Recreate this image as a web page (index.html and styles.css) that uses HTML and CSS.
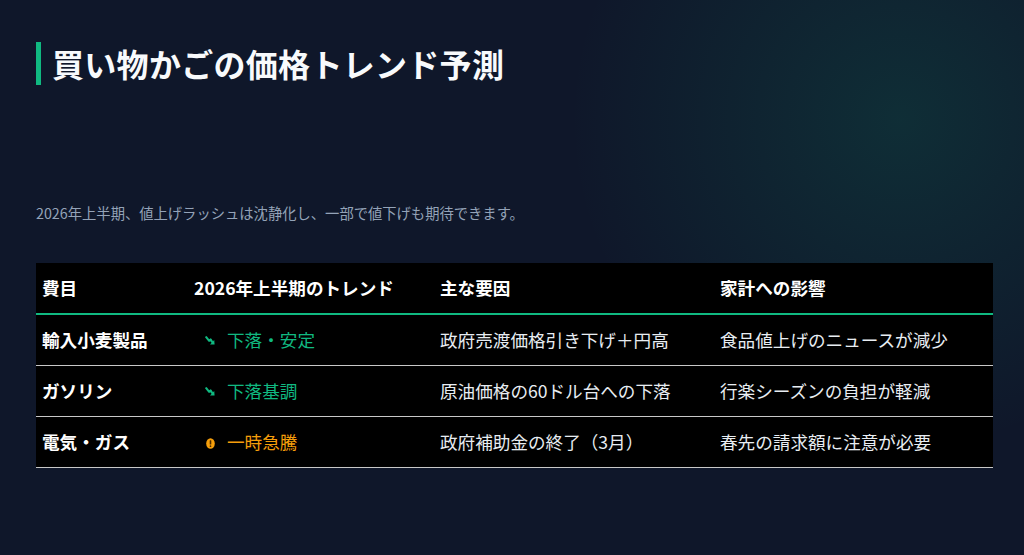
FILE: index.html
```html
<!DOCTYPE html>
<html lang="ja">
<head>
<meta charset="utf-8">
<title>買い物かごの価格トレンド予測</title>
<link rel="stylesheet" href="styles.css">
</head>
<body>
<main class="page">
  <h1 class="title">買い物かごの価格トレンド予測</h1>
  <p class="lead">2026年上半期、値上げラッシュは沈静化し、一部で値下げも期待できます。</p>
  <table class="trend-table">
    <colgroup>
      <col class="c1"><col class="c2"><col class="c3"><col class="c4">
    </colgroup>
    <thead>
      <tr><th>費目</th><th>2026年上半期のトレンド</th><th>主な要因</th><th>家計への影響</th></tr>
    </thead>
    <tbody>
      <tr>
        <td class="item">輸入小麦製品</td>
        <td class="down"><span class="ico"><svg width="10" height="9" viewBox="0 0 10 9"><path d="M1.2 1.2 L4.2 4.8 L5.6 3.4 L7.4 6.2" fill="none" stroke="currentColor" stroke-width="2.1" stroke-linejoin="round" stroke-linecap="round"/><path d="M5 8.4 L9.6 8.6 L9.2 4 Z" fill="currentColor"/></svg></span>下落・安定</td>
        <td>政府売渡価格引き下げ＋円高</td>
        <td>食品値上げのニュースが減少</td>
      </tr>
      <tr>
        <td class="item">ガソリン</td>
        <td class="down"><span class="ico"><svg width="10" height="9" viewBox="0 0 10 9"><path d="M1.2 1.2 L4.2 4.8 L5.6 3.4 L7.4 6.2" fill="none" stroke="currentColor" stroke-width="2.1" stroke-linejoin="round" stroke-linecap="round"/><path d="M5 8.4 L9.6 8.6 L9.2 4 Z" fill="currentColor"/></svg></span>下落基調</td>
        <td>原油価格の60ドル台への下落</td>
        <td>行楽シーズンの負担が軽減</td>
      </tr>
      <tr>
        <td class="item">電気・ガス</td>
        <td class="up"><span class="ico ico-warn"><svg width="9" height="11" viewBox="0 0 9 11"><ellipse cx="4.5" cy="5.5" rx="4.3" ry="5.3" fill="currentColor"/><rect x="3.7" y="2.3" width="1.6" height="4.2" rx="0.5" fill="#4a2a00"/><circle cx="4.5" cy="8.2" r="0.85" fill="#4a2a00"/></svg></span>一時急騰</td>
        <td>政府補助金の終了（3月）</td>
        <td>春先の請求額に注意が必要</td>
      </tr>
    </tbody>
  </table>
</main>
</body>
</html>
```
FILE: styles.css
```css
html, body {
  margin: 0;
  padding: 0;
}
body {
  width: 1024px;
  height: 555px;
  overflow: hidden;
  background-color: #0f172a;
  background-image: radial-gradient(circle 330px at 900px 120px, rgba(16, 185, 129, 0.14), rgba(16, 185, 129, 0) 100%);
  font-family: "Noto Sans CJK JP", "Noto Sans", sans-serif;
  color: #f1f5f9;
}
.page {
  padding: 42px 0 0 36px;
}
.title {
  margin: 0;
  font-size: 32px;
  line-height: 43px;
  font-weight: 700;
  letter-spacing: 0.3px;
  color: #f8fafc;
  border-left: 5px solid #10b981;
  padding-left: 11px;
}
.lead {
  margin: 117px 0 0 0;
  font-size: 14.3px;
  line-height: 22px;
  color: #94a3b8;
}
.trend-table {
  margin-top: 39px;
  width: 957px;
  table-layout: fixed;
  border-collapse: collapse;
  background: #000;
  font-size: 17.6px;
  line-height: 26px;
}
.c1 { width: 152px; }
.c2 { width: 246px; }
.c3 { width: 280px; }
.c4 { width: 279px; }
.trend-table th,
.trend-table td {
  padding: 12px 6px;
  text-align: left;
  white-space: nowrap;
}
.trend-table th {
  font-weight: 700;
  color: #ffffff;
  border-bottom: 2px solid #10b981;
}
.trend-table td {
  color: #e8edf2;
  border-bottom: 1px solid #c8c8c8;
}
.trend-table td.item {
  font-weight: 700;
  color: #ffffff;
}
.trend-table td.down {
  color: #10b981;
}
.trend-table td.up {
  color: #f59e0b;
}
.ico {
  display: inline-flex;
  justify-content: center;
  align-items: center;
  width: 20px;
  height: 26px;
  margin-left: 6px;
  margin-right: 7px;
  vertical-align: top;
}
.ico-warn {
  padding-top: 2px;
  box-sizing: border-box;
}
.ico svg {
  display: block;
}
```
